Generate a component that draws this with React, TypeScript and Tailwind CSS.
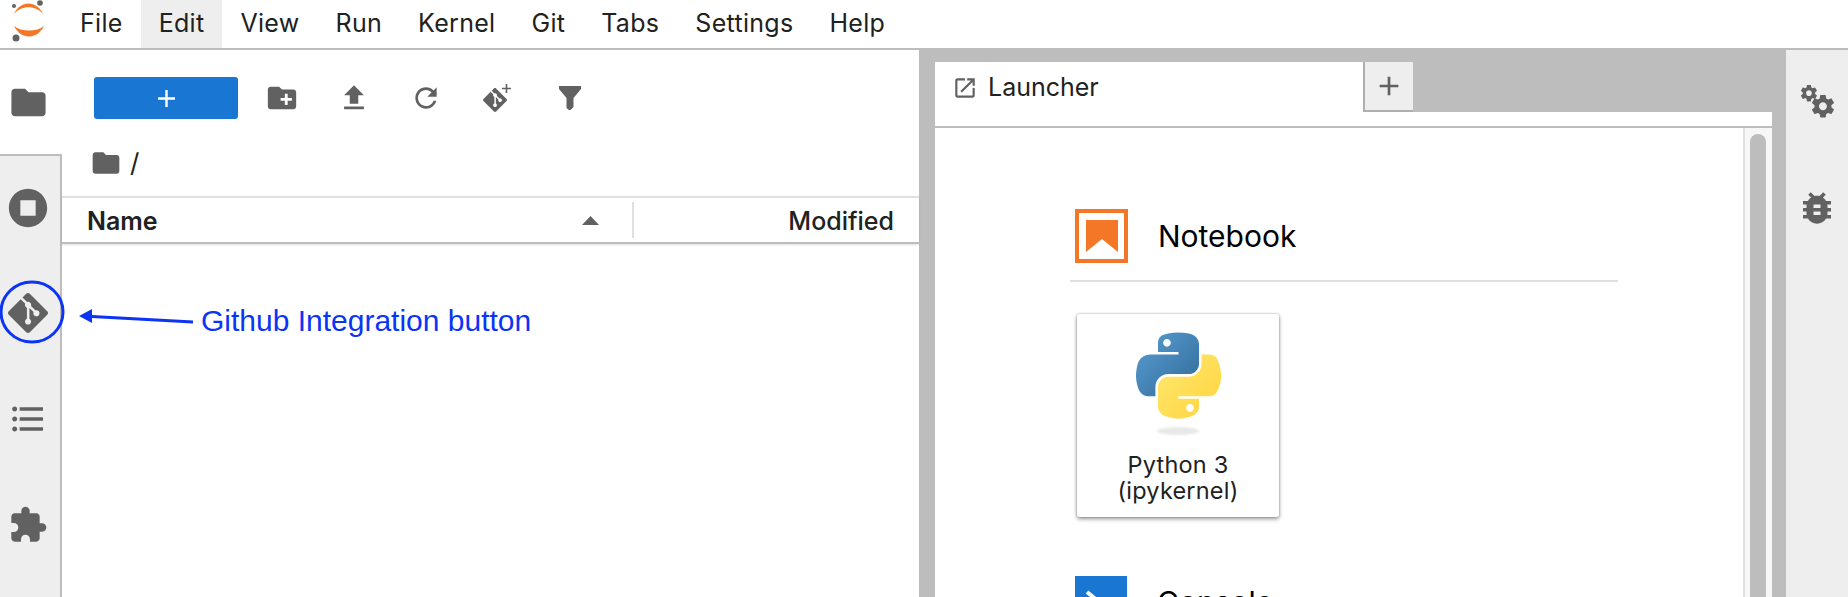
import type { ReactNode } from 'react';

const UI_FONT = 'font-[Inter,"Liberation_Sans",sans-serif]';

const MENU_ITEMS = ['File', 'Edit', 'View', 'Run', 'Kernel', 'Git', 'Tabs', 'Settings', 'Help'];

const PATHS = {
	folder: 'M10 4H4c-1.1 0-1.99.9-1.99 2L2 18c0 1.1.9 2 2 2h16c1.1 0 2-.9 2-2V8c0-1.1-.9-2-2-2h-8l-2-2z',
	newFolder:
		'M20 6h-8l-2-2H4c-1.11 0-1.99.89-1.99 2L2 18c0 1.11.89 2 2 2h16c1.11 0 2-.89 2-2V8c0-1.11-.89-2-2-2zm-1 8h-3v3h-2v-3h-3v-2h3V9h2v3h3v2z',
	upload: 'M9 16h6v-6h4l-7-7-7 7h4zm-4 2h14v2H5z',
	refresh:
		'M17.65 6.35C16.2 4.9 14.21 4 12 4c-4.42 0-7.99 3.58-7.99 8s3.57 8 7.99 8c3.73 0 6.84-2.55 7.73-6h-2.08c-.82 2.33-3.04 4-5.65 4-3.31 0-6-2.69-6-6s2.69-6 6-6c1.66 0 3.14.69 4.22 1.78L13 11h7V4l-2.35 2.35z',
	stop: 'M12 2C6.48 2 2 6.48 2 12s4.48 10 10 10 10-4.48 10-10S17.52 2 12 2zm4 14H8V8h8v8z',
	git: 'M23.546 10.93L13.067.452c-.604-.603-1.582-.603-2.188 0L8.708 2.627l2.76 2.76c.645-.215 1.379-.07 1.889.441.516.515.658 1.258.438 1.9l2.658 2.66c.645-.223 1.387-.078 1.9.435.721.72.721 1.884 0 2.604-.719.719-1.881.719-2.6 0-.539-.541-.674-1.337-.404-1.996L12.86 8.955v6.525c.176.086.342.203.488.348.713.721.713 1.883 0 2.6-.719.721-1.889.721-2.609 0-.719-.719-.719-1.879 0-2.598.182-.18.387-.316.605-.406V8.835c-.217-.091-.424-.222-.6-.401-.545-.545-.676-1.342-.396-2.009L7.636 3.7.45 10.881c-.6.605-.6 1.584 0 2.189l10.48 10.477c.604.604 1.582.604 2.186 0l10.43-10.43c.605-.603.605-1.582 0-2.187',
	list: 'M4 10.5c-.83 0-1.5.67-1.5 1.5s.67 1.5 1.5 1.5 1.5-.67 1.5-1.5-.67-1.5-1.5-1.5zm0-6c-.83 0-1.5.67-1.5 1.5S3.17 7.5 4 7.5 5.5 6.83 5.5 6 4.83 4.5 4 4.5zm0 12c-.83 0-1.5.68-1.5 1.5s.68 1.5 1.5 1.5 1.5-.68 1.5-1.5-.67-1.5-1.5-1.5zM7 19h14v-2H7v2zm0-6h14v-2H7v2zm0-8v2h14V5H7z',
	puzzle:
		'M20.5 11H19V7c0-1.1-.9-2-2-2h-4V3.5C13 2.12 11.88 1 10.5 1S8 2.12 8 3.5V5H4c-1.1 0-1.99.9-1.99 2v3.8H3.5c1.49 0 2.7 1.21 2.7 2.7s-1.21 2.7-2.7 2.7H2V20c0 1.1.9 2 2 2h3.8v-1.5c0-1.49 1.21-2.7 2.7-2.7 1.49 0 2.7 1.21 2.7 2.7V22H17c1.1 0 2-.9 2-2v-4h1.5c1.38 0 2.5-1.12 2.5-2.5S21.88 11 20.5 11z',
	launch: 'M19 19H5V5h7V3H5c-1.11 0-2 .9-2 2v14c0 1.1.89 2 2 2h14c1.1 0 2-.9 2-2v-7h-2v7zM14 3v2h3.59l-9.83 9.83 1.41 1.41L19 6.41V10h2V3h-7z',
	bug: 'M20 8h-2.81c-.45-.78-1.07-1.45-1.82-1.96L17 4.41 15.59 3l-2.17 2.17C12.96 5.06 12.49 5 12 5c-.49 0-.96.06-1.41.17L8.41 3 7 4.41l1.62 1.63C7.88 6.55 7.26 7.22 6.81 8H4v2h2.09c-.05.33-.09.66-.09 1v1H4v2h2v1c0 .34.04.67.09 1H4v2h2.81c1.04 1.79 2.97 3 5.19 3s4.15-1.21 5.19-3H20v-2h-2.09c.05-.33.09-.66.09-1v-1h2v-2h-2v-1c0-.34-.04-.67-.09-1H20V8zm-6 8h-4v-2h4v2zm0-4h-4v-2h4v2z',
	gear: 'M19.43 12.98c.04-.32.07-.64.07-.98s-.03-.66-.07-.98l2.11-1.65c.19-.15.24-.42.12-.64l-2-3.46c-.12-.22-.39-.3-.61-.22l-2.49 1c-.52-.4-1.08-.73-1.69-.98l-.38-2.65C14.46 2.18 14.25 2 14 2h-4c-.25 0-.46.18-.49.42l-.38 2.65c-.61.25-1.17.59-1.69.98l-2.49-1c-.23-.09-.49 0-.61.22l-2 3.46c-.13.22-.07.49.12.64l2.11 1.65c-.04.32-.07.65-.07.98s.03.66.07.98l-2.11 1.65c-.19.15-.24.42-.12.64l2 3.46c.12.22.39.3.61.22l2.49-1c.52.4 1.08.73 1.69.98l.38 2.65c.03.24.24.42.49.42h4c.25 0 .46-.18.49-.42l.38-2.65c.61-.25 1.17-.59 1.69-.98l2.49 1c.23.09.49 0 .61-.22l2-3.46c.12-.22.07-.49-.12-.64l-2.11-1.65zM12 15.5c-1.93 0-3.5-1.57-3.5-3.5s1.57-3.5 3.5-3.5 3.5 1.57 3.5 3.5-1.57 3.5-3.5 3.5z',
	plus: 'M19 13h-6v6h-2v-6H5v-2h6V5h2v6h6v2z',
};

const Icon = ({ d, className }: { d: string; className: string }) => (
	<svg viewBox="0 0 24 24" className={className} fill="#616161">
		<path d={d} />
	</svg>
);

const JupyterLogo = () => (
	<svg viewBox="0 0 56 42" className="w-[56px] h-[42px] shrink-0">
		<path d="M14 14C20 0 37 0 43 14 36 5 21 5 14 14z" fill="#f37726" />
		<path d="M14 26C21 40 37 40 44 26 37 32 21 32 14 26z" fill="#f37726" />
		<circle cx="14" cy="6" r="2" fill="#616161" />
		<circle cx="40" cy="3" r="2.8" fill="#616161" />
		<circle cx="16" cy="38" r="3.5" fill="#616161" />
	</svg>
);

const PythonLogo = () => (
	<svg viewBox="0 0 111 112" className="w-[85px] h-[87px]">
		<defs>
			<linearGradient id="py-blue" x1="0" y1="0" x2="1" y2="1">
				<stop offset="0" stopColor="#5a9fd4" />
				<stop offset="1" stopColor="#306998" />
			</linearGradient>
			<linearGradient id="py-yellow" x1="0" y1="0" x2="1" y2="1">
				<stop offset="0" stopColor="#ffe873" />
				<stop offset="1" stopColor="#ffd43b" />
			</linearGradient>
		</defs>
		<path
			fill="url(#py-blue)"
			d="M54.92 0C50.34.02 45.96.41 42.11 1.09 30.76 3.1 28.7 7.29 28.7 15.03V25.25H55.51V28.66H18.64C10.85 28.66 4.02 33.34 1.89 42.25-.57 52.46-.68 58.84 1.89 69.5 3.79 77.44 8.34 83.09 16.13 83.09H25.35V70.84C25.35 61.99 33 54.18 42.11 54.18H68.89C76.34 54.18 82.29 48.04 82.29 40.56V15.03C82.29 7.76 76.16 2.3 68.89 1.09 64.29.33 59.5-.02 54.92 0zM40.42 8.22C43.19 8.22 45.45 10.52 45.45 13.35 45.45 16.17 43.19 18.45 40.42 18.45 37.64 18.45 35.39 16.17 35.39 13.35 35.39 10.52 37.64 8.22 40.42 8.22z"
		/>
		<path
			fill="url(#py-yellow)"
			d="M85.64 28.66V40.56C85.64 49.8 77.81 57.57 68.89 57.57H42.11C34.78 57.57 28.7 63.84 28.7 71.18V96.72C28.7 103.99 35.02 108.26 42.11 110.34 50.6 112.84 58.74 113.29 68.89 110.34 75.64 108.39 82.29 104.46 82.29 96.72V86.5H55.51V83.09H95.7C103.49 83.09 106.39 77.65 109.1 69.5 111.9 61.11 111.78 53.04 109.1 42.25 107.18 34.49 103.5 28.66 95.7 28.66zM70.58 93.31C73.36 93.31 75.61 95.59 75.61 98.41 75.61 101.24 73.36 103.54 70.58 103.54 67.81 103.54 65.55 101.24 65.55 98.41 65.55 95.59 67.81 93.31 70.58 93.31z"
		/>
	</svg>
);

const NotebookIcon = () => (
	<svg viewBox="0 0 53 54" className="w-[53px] h-[54px] shrink-0">
		<rect x="2" y="2" width="49" height="50" fill="#fff" stroke="#f37726" strokeWidth="4" />
		<path d="M11 11h32v32L27 30 11 43z" fill="#f37726" />
	</svg>
);

const ConsoleIcon = () => (
	<svg viewBox="0 0 52 52" className="w-[52px] h-[52px] shrink-0">
		<rect width="52" height="52" fill="#1976d2" />
		<path d="M12 16l12 10-12 10" fill="none" stroke="#fff" strokeWidth="4" />
		<path d="M26 38h14" stroke="#fff" strokeWidth="4" />
	</svg>
);

const SideTab = ({ children, topBorder }: { children: ReactNode; topBorder?: boolean }) => (
	<div
		className={
			topBorder
				? 'h-[106px] flex items-center justify-center pr-[4px] border-t-2 border-r-2 border-[#bdbdbd]'
				: 'h-[106px] flex items-center justify-center pr-[4px] border-r-2 border-[#bdbdbd]'
		}
	>
		{children}
	</div>
);

const LeftSidebar = () => (
	<div className="w-[62px] shrink-0 bg-[#eeeeee] flex flex-col overflow-hidden">
		<div className="h-[104px] flex items-center justify-center pr-[6px] bg-white">
			<Icon d={PATHS.folder} className="w-[41px] h-[41px]" />
		</div>
		<SideTab topBorder>
			<Icon d={PATHS.stop} className="w-[46px] h-[46px]" />
		</SideTab>
		<SideTab>
			<Icon d={PATHS.git} className="w-[40px] h-[40px]" />
		</SideTab>
		<SideTab>
			<Icon d={PATHS.list} className="w-[40px] h-[40px]" />
		</SideTab>
		<div className="flex-1 flex items-start justify-center pr-[4px] pt-[33px] border-r-2 border-[#bdbdbd]">
			<Icon d={PATHS.puzzle} className="w-[40px] h-[40px]" />
		</div>
	</div>
);

const FilePanel = () => (
	<div className="w-[857px] shrink-0 bg-white flex flex-col">
		<div className="h-[146px] flex flex-col">
			<div className="h-[96px] flex items-center pl-[32px]">
				<button className="w-[144px] h-[42px] rounded-[3px] bg-[#1976d2] flex items-center justify-center">
					<svg viewBox="0 0 24 24" className="w-[29px] h-[29px]" fill="#fff">
						<path d={PATHS.plus} />
					</svg>
				</button>
				<Icon d={PATHS.newFolder} className="w-[34px] h-[34px] ml-[27px]" />
				<Icon d={PATHS.upload} className="w-[34px] h-[34px] ml-[38px]" />
				<Icon d={PATHS.refresh} className="w-[32px] h-[32px] ml-[39px]" />
				<svg viewBox="0 0 28 28" className="w-[28px] h-[28px] ml-[41px]" fill="#616161">
					<path transform="translate(0 4)" d={PATHS.git} />
					<path d="M22.7 0h1.6v3.7H28v1.6h-3.7V9h-1.6V5.3H19V3.7h3.7z" />
				</svg>
				<svg viewBox="0 0 22 24" className="w-[22px] h-[24px] ml-[48px]" fill="#616161">
					<path d="M0 0h22v3l-7.5 9v9l-3 3H10l-2.500-2V12L0 3z" />
				</svg>
			</div>
			<div className="flex items-center gap-[8px] mt-[2px] h-[30px] pl-[28px]">
				<Icon d={PATHS.folder} className="w-[32px] h-[32px]" />
				<span className={`${UI_FONT} text-[26px] text-[#212121] leading-none`}>/</span>
			</div>
		</div>
		<div className="h-[48px] border-t-2 border-b-2 border-t-[#e0e0e0] border-b-[#bdbdbd] shadow-[0_1px_2px_rgba(0,0,0,0.12)] flex items-center relative">
			<span className={`${UI_FONT} pl-[25px] pt-[4px] text-[25px] font-semibold text-[#212121] flex-1`}>Name</span>
			<svg viewBox="0 0 17 9" className="w-[17px] h-[9px] fill-[#616161]">
				<path d="M8.500 0L17 9H0z" />
			</svg>
			<div className="w-[2px] h-[36px] bg-[#e0e0e0] ml-[33px]" />
			<span className={`${UI_FONT} w-[285px] pr-[25px] pt-[4px] text-right text-[25px] font-medium text-[#212121]`}>
				Modified
			</span>
		</div>
	</div>
);

const TabBar = () => (
	<div className="h-[78px] shrink-0 flex flex-col">
		<div className="h-[76px] flex pt-[12px]">
			<div className="w-[428px] h-[64px] bg-white flex items-center pl-[17px] pb-[12px] gap-[10px]">
				<Icon d={PATHS.launch} className="w-[26px] h-[26px]" />
				<span className={`${UI_FONT} text-[25px] text-[#212121]`}>Launcher</span>
			</div>
			<div className="flex-1 flex flex-col">
				<div className="w-[50px] h-[50px] bg-[#eeeeee] border-l-2 border-b-2 border-[#aeaeae] flex items-center justify-center">
					<Icon d={PATHS.plus} className="w-[32px] h-[32px]" />
				</div>
				<div className="flex-1 bg-white" />
			</div>
		</div>
		<div className="h-[2px] bg-[#bdbdbd]" />
	</div>
);

const LauncherSection = ({ icon, title }: { icon: ReactNode; title: string }) => (
	<div className="flex items-center gap-[30px] pl-[5px]">
		{icon}
		<span className={`${UI_FONT} text-[30px] text-black`}>{title}</span>
	</div>
);

const Launcher = () => (
	<div className="flex-1 flex min-h-0 overflow-hidden bg-white">
		<div className="flex-1 pt-[81px] pl-[135px]">
			<div className="w-[548px]">
				<LauncherSection icon={<NotebookIcon />} title="Notebook" />
				<div className="h-[2px] bg-[#e0e0e0] mt-[17px]" />
				<div className="ml-[7px] mt-[32px] w-[202px] h-[203px] bg-white rounded-[2px] shadow-[0_0_2px_rgba(0,0,0,0.35),0_2px_4px_rgba(0,0,0,0.4)] flex flex-col items-center pt-[18px]">
					<PythonLogo />
					<div className="w-[42px] h-[8px] rounded-[50%] bg-[#e8e8e8] mt-[8px] blur-[1px]" />
					<span className={`${UI_FONT} mt-[17px] text-[23.5px] leading-[26px] text-[#212121] text-center tracking-[0.2px]`}>
						Python 3
						<br />
						(ipykernel)
					</span>
				</div>
				<div className="mt-[59px]">
					<LauncherSection icon={<ConsoleIcon />} title="Console" />
				</div>
			</div>
		</div>
		<div className="w-[29px] shrink-0 bg-[#f7f7f7] border-l-2 border-[#e0e0e0] pl-[5px] pt-[6px]">
			<div className="w-[16px] h-[600px] rounded-full bg-[#bdbdbd]" />
		</div>
	</div>
);

const Annotation = () => (
	<>
		<svg viewBox="0 0 210 70" className="absolute left-0 top-[278px] w-[210px] h-[70px]" fill="none">
			<ellipse cx="32" cy="34" rx="31" ry="30" stroke="#0b34f5" strokeWidth="3" />
			<path d="M92 38.500L193 44" stroke="#0b34f5" strokeWidth="3" />
			<path d="M79 38l13-7v14z" fill="#0b34f5" />
		</svg>
		<span className="absolute left-[201px] top-[304px] font-['Liberation_Sans',sans-serif] text-[30px] leading-[34px] text-[#0b34f5] whitespace-nowrap">
			Github Integration button
		</span>
	</>
);

const App = () => (
	<div className="relative w-[1848px] h-[597px] overflow-hidden flex flex-col bg-white">
		<div className="h-[48px] shrink-0 flex items-stretch bg-white">
			<JupyterLogo />
			<div className="flex pl-[6px]">
				{MENU_ITEMS.map(item => (
					<div
						key={item}
						className={`${UI_FONT} px-[18px] flex items-center text-[25px] tracking-[0.3px] text-[#212121] ${item === 'Edit' ? 'bg-[#eeeeee]' : ''}`}
					>
						{item}
					</div>
				))}
			</div>
		</div>
		<div className="h-[2px] shrink-0 bg-[#bdbdbd]" />
		<div className="flex-1 flex min-h-0">
			<LeftSidebar />
			<FilePanel />
			<div className="flex-1 min-w-0 bg-[#bdbdbd] pl-[16px] pr-[14px] flex flex-col">
				<TabBar />
				<Launcher />
			</div>
			<div className="w-[62px] shrink-0 bg-[#eeeeee] flex flex-col items-center">
				<svg viewBox="0 0 40 40" className="w-[40px] h-[40px] mt-[32px]" fill="#616161">
					<path transform="translate(2.100 1.360) scale(0.82)" d={PATHS.gear} />
					<path transform="translate(12.400 10.700) scale(1.13)" d={PATHS.gear} />
				</svg>
				<Icon d={PATHS.bug} className="w-[42px] h-[42px] mt-[65px]" />
			</div>
		</div>
		<Annotation />
	</div>
);

export default App;
